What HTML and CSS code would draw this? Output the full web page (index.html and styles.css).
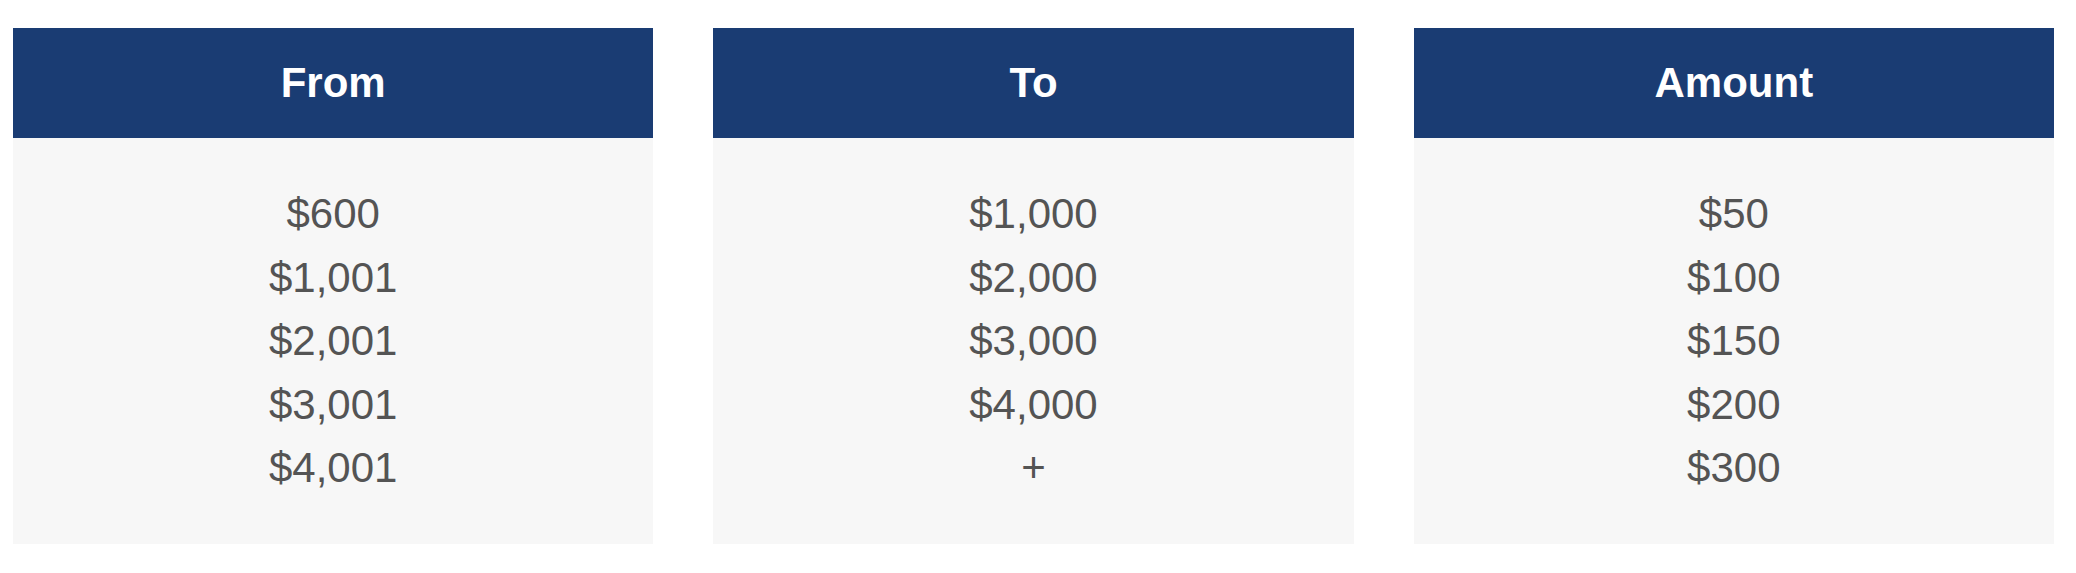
FILE: index.html
```html
<!DOCTYPE html>
<html lang="en">
<head>
<meta charset="utf-8">
<title>Rates</title>
<link rel="stylesheet" href="styles.css">
</head>
<body>
<div class="tables">
  <div class="col">
    <div class="col-head">From</div>
    <ul class="col-body">
      <li>$600</li>
      <li>$1,001</li>
      <li>$2,001</li>
      <li>$3,001</li>
      <li>$4,001</li>
    </ul>
  </div>
  <div class="col">
    <div class="col-head">To</div>
    <ul class="col-body">
      <li>$1,000</li>
      <li>$2,000</li>
      <li>$3,000</li>
      <li>$4,000</li>
      <li>+</li>
    </ul>
  </div>
  <div class="col">
    <div class="col-head">Amount</div>
    <ul class="col-body">
      <li>$50</li>
      <li>$100</li>
      <li>$150</li>
      <li>$200</li>
      <li>$300</li>
    </ul>
  </div>
</div>
</body>
</html>
```
FILE: styles.css
```css
html, body {
  margin: 0;
  padding: 0;
  background: #ffffff;
  font-family: "Liberation Sans", Arial, sans-serif;
}

.tables {
  display: grid;
  grid-template-columns: repeat(3, 1fr);
  column-gap: 60px;
  width: 2041px;
  padding: 28px 0 0 13px;
}

.col {
  display: flex;
  flex-direction: column;
}

.col-head {
  box-sizing: border-box;
  height: 110px;
  padding-bottom: 2px;
  display: flex;
  align-items: center;
  justify-content: center;
  background: #1a3c73;
  color: #ffffff;
  font-weight: bold;
  font-size: 42px;
  line-height: 63px;
}

.col-body {
  list-style: none;
  margin: 0;
  padding: 44px 0;
  background: #f7f7f7;
  color: #545454;
  font-size: 42px;
  line-height: 63.5px;
  text-align: center;
}

.col-body li {
  margin: 0;
  padding: 0;
}
```
